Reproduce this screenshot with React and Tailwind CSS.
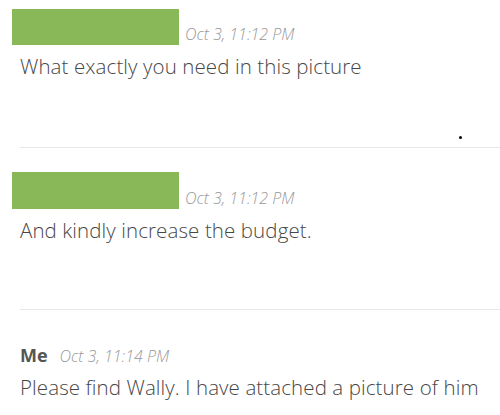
export default function App() {
  return (
    <div className="w-[500px] h-[415px] bg-white overflow-hidden font-['Open_Sans',sans-serif] text-[#474747]">
      {/* message 1 */}
      <div className="relative h-[148px] border-b border-[#e8e8e8] ml-5">
        <div className="flex items-end -ml-2 pt-[9px]">
          <div className="w-[167px] h-[36px] bg-[#88b857]" />
          <span className="ml-[6px] mb-[3px] text-[16px] font-light italic text-[#999] leading-none">Oct 3, 11:12 PM</span>
        </div>
        <p className="mt-[7px] text-[20.5px] font-light tracking-[0.1px] leading-[28px]">What exactly you need in this picture</p>
        <span className="absolute left-[439px] top-[136px] w-[3px] h-[3px] rounded-full bg-black" />
      </div>
      {/* message 2 */}
      <div className="h-[162px] border-b border-[#e8e8e8] ml-5">
        <div className="flex items-end -ml-2 pt-[24px]">
          <div className="w-[167px] h-[37px] bg-[#88b857]" />
          <span className="ml-[6px] mb-[3px] text-[16px] font-light italic text-[#999] leading-none">Oct 3, 11:12 PM</span>
        </div>
        <p className="mt-[7px] text-[20.5px] font-light tracking-[0.1px] leading-[28px]">And kindly increase the budget.</p>
      </div>
      {/* message 3 */}
      <div className="ml-5 pt-[32px]">
        <div className="flex items-baseline">
          <span className="text-[18px] font-bold text-[#555]">Me</span>
          <span className="ml-[12px] text-[16px] font-light italic text-[#999]">Oct 3, 11:14 PM</span>
        </div>
        <p className="mt-[4px] text-[20.5px] font-light tracking-[0.1px] leading-[28px]">Please find Wally. I have attached a picture of him</p>
      </div>
    </div>
  );
}
